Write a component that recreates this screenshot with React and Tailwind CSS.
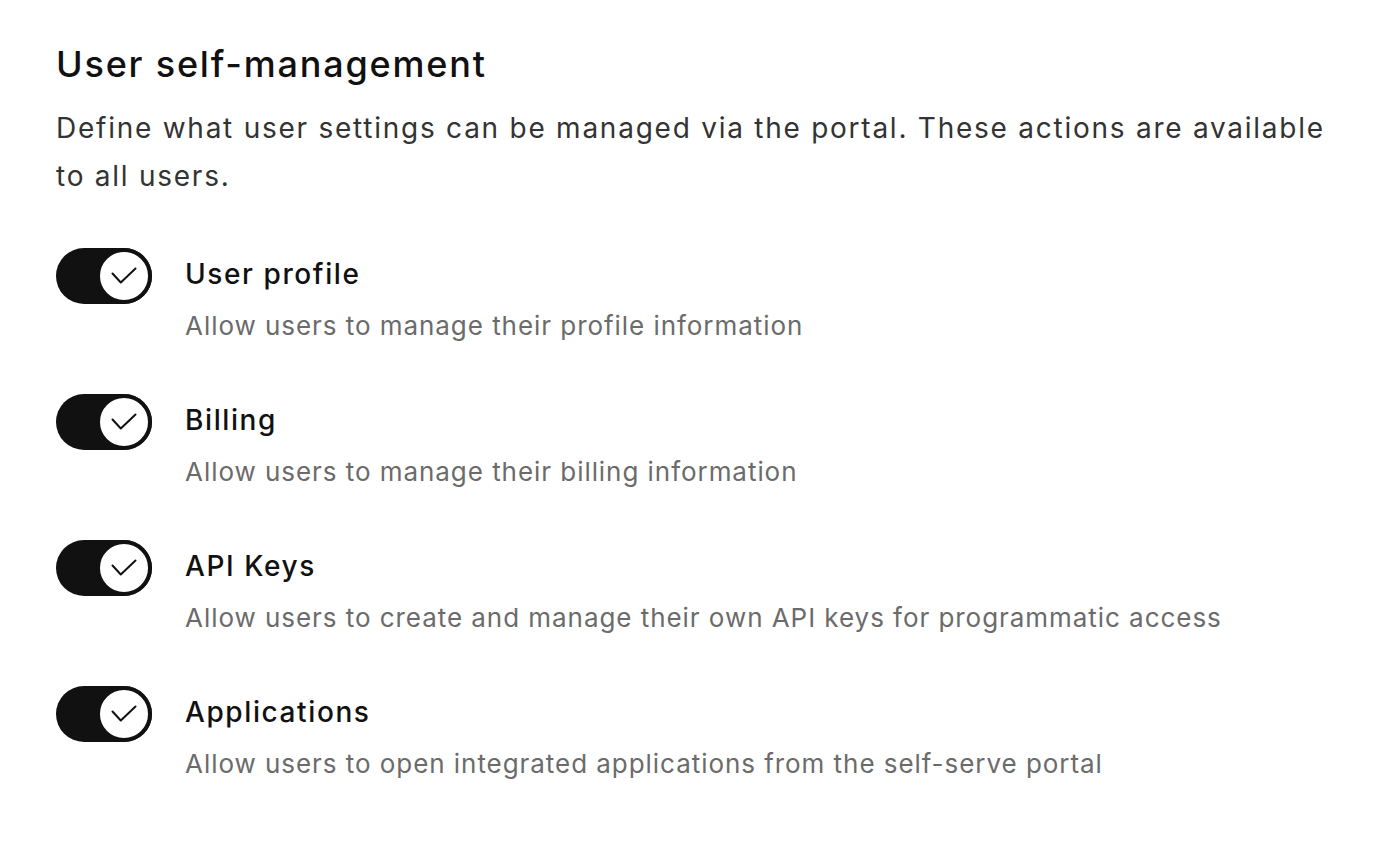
const items = [
  { title: "User profile", desc: "Allow users to manage their profile information" },
  { title: "Billing", desc: "Allow users to manage their billing information" },
  { title: "API Keys", desc: "Allow users to create and manage their own API keys for programmatic access" },
  { title: "Applications", desc: "Allow users to open integrated applications from the self-serve portal" },
];

function Toggle() {
  return (
    <div className="relative w-[96px] h-[56px] shrink-0 rounded-full bg-[#111111]">
      <div className="absolute right-0 top-0 w-[56px] h-[56px] rounded-full bg-white border-4 border-[#111111] flex items-center justify-center">
        <svg width="26" height="18" viewBox="0 0 26 18" fill="none">
          <path d="M1.5 6.5 9.8 15.5 24.5 1.5" stroke="#111111" strokeWidth="2" strokeLinecap="round" strokeLinejoin="round" />
        </svg>
      </div>
    </div>
  );
}

export default function App() {
  return (
    <div className="min-h-screen bg-white pl-[56px] pr-[16px] pt-[44px] font-['Inter',sans-serif]">
      <h1 className="text-[36px] leading-[40px] font-medium tracking-[1.8px] text-[#111111]">User self-management</h1>
      <p className="mt-[20px] text-[28px] leading-[48px] tracking-[1.75px] text-[#333333] max-w-[1300px]">
        Define what user settings can be managed via the portal. These actions are available to all users.
      </p>

      <div className="mt-[48px] flex flex-col gap-[48px]">
        {items.map((it) => (
          <div key={it.title} className="flex items-start gap-[33px]">
            <Toggle />
            <div>
              <div className="text-[28px] leading-[52px] font-medium tracking-[1.6px] text-[#111111]">{it.title}</div>
              <div className="mt-[6px] text-[26px] leading-[40px] tracking-[0.95px] text-[#6b6b6b]">{it.desc}</div>
            </div>
          </div>
        ))}
      </div>
    </div>
  );
}
